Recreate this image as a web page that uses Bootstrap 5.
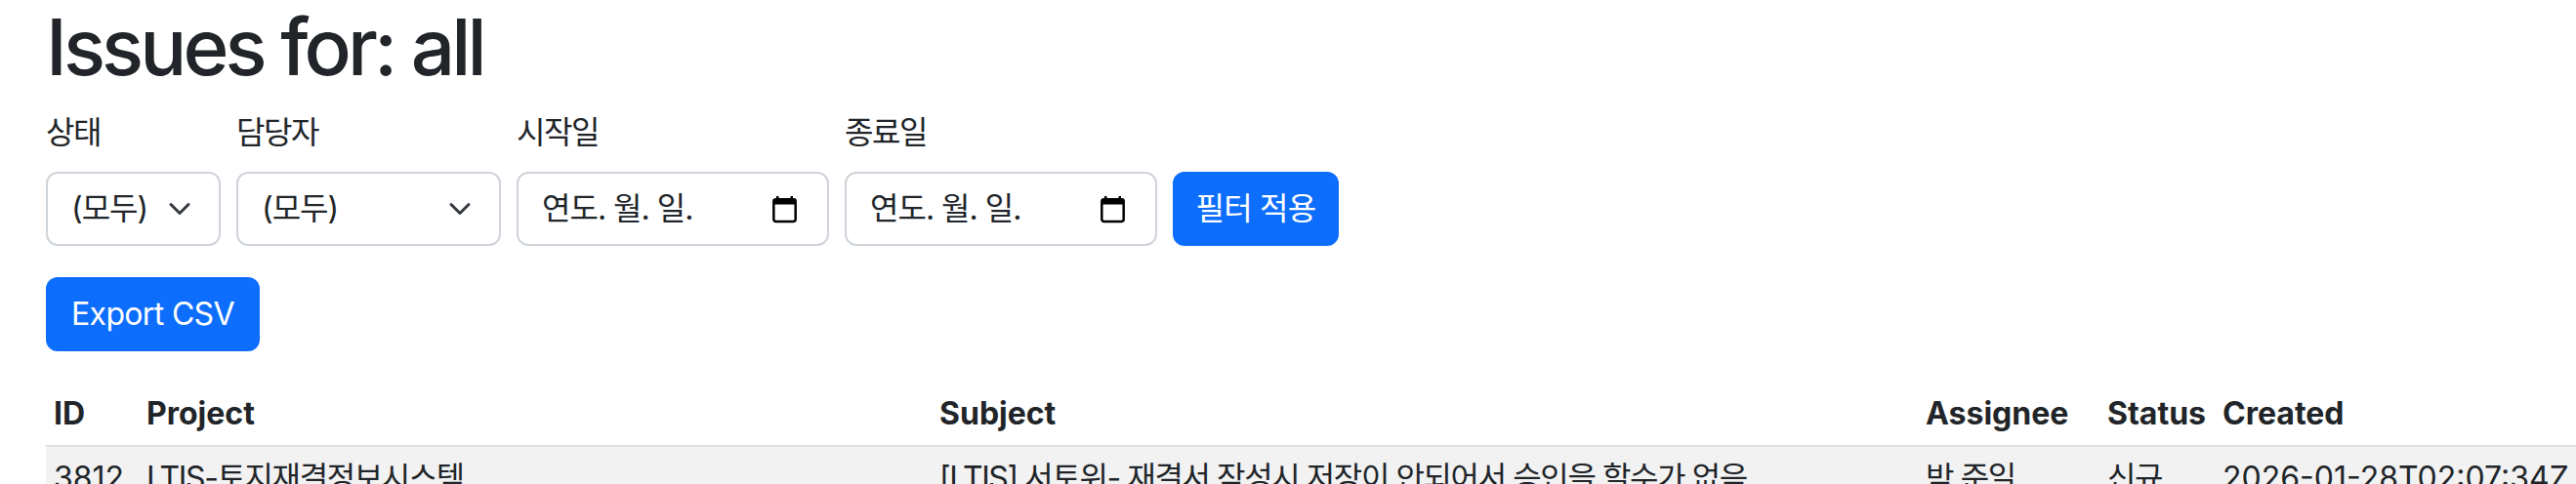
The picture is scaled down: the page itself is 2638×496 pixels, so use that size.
<!DOCTYPE html>
<html lang="ko">
<head>
<meta charset="utf-8">
<title>Issues</title>
<link href="https://cdn.jsdelivr.net/npm/bootstrap@5.3.0/dist/css/bootstrap.min.css" rel="stylesheet">
<style>
html { zoom: 2; }
html, body { overflow: hidden; height: 100%; }
body { font-family: Inter, "Noto Sans CJK KR", sans-serif; }
.page-wrap { width: 1319px; padding: 0 24px 0 23.5px; }
.issues-title { margin-bottom: 8px; font-weight: 500; letter-spacing: -1.95px; }
.form-label, .ko-tight { letter-spacing: -.7px; }
.form-select, .form-control { border-color: #ced4da; }
.form-select { letter-spacing: -.5px; }
.sel-status { width: 89.5px; padding-right: 28px; }
.sel-assignee { width: 135.5px; }
.date-box { width: 160px; height: 38px; }
.date-box span { letter-spacing: -.5px; }
.date-box svg { width: 14.5px; height: 14.5px; margin-right: 2.5px; }
.btn-apply { width: 85px; padding-left: 0; padding-right: 0; letter-spacing: -.4px; }
.btn-export { letter-spacing: -.33px; }
.tbl-wrap { width: 1296px; }
.issue-table { table-layout: fixed; width: 1296px; white-space: nowrap; margin: 0; }
.c-id { width: 47.5px; }
.c-project { width: 406px; }
.c-subject { width: 505px; }
.c-assignee { width: 93px; }
.c-status { width: 59px; }
</style>
</head>
<body>
<div class="page-wrap">
<h1 class="issues-title">Issues for: all</h1>
<form class="d-flex align-items-end gap-2 mb-3">
  <div><label class="form-label">상태</label><select class="form-select sel-status"><option>(모두)</option></select></div>
  <div><label class="form-label">담당자</label><select class="form-select sel-assignee"><option>(모두)</option></select></div>
  <div><label class="form-label">시작일</label><div class="form-control date-box d-flex justify-content-between align-items-center"><span>연도. 월. 일.</span><svg viewBox="0 0 14 14"><path d="M3.5 0.5v2M10.5 0.5v2" stroke="#000" stroke-width="1.2"/><rect x="1.6" y="2" width="10.8" height="11" rx="1" fill="none" stroke="#000" stroke-width="1.2"/><rect x="1.6" y="2" width="10.8" height="2.6" fill="#000"/></svg></div></div>
  <div><label class="form-label">종료일</label><div class="form-control date-box d-flex justify-content-between align-items-center"><span>연도. 월. 일.</span><svg viewBox="0 0 14 14"><path d="M3.5 0.5v2M10.5 0.5v2" stroke="#000" stroke-width="1.2"/><rect x="1.6" y="2" width="10.8" height="11" rx="1" fill="none" stroke="#000" stroke-width="1.2"/><rect x="1.6" y="2" width="10.8" height="2.6" fill="#000"/></svg></div></div>
  <button type="button" class="btn btn-primary btn-apply">필터 적용</button>
</form>
<a class="btn btn-primary btn-export mb-3" href="#">Export CSV</a>
<div class="tbl-wrap">
<table class="table table-striped table-sm issue-table">
<colgroup><col class="c-id"><col class="c-project"><col class="c-subject"><col class="c-assignee"><col class="c-status"><col></colgroup>
<thead><tr><th>ID</th><th>Project</th><th>Subject</th><th>Assignee</th><th>Status</th><th>Created</th></tr></thead>
<tbody><tr><td>3812</td><td class="ko-tight">LTIS-토지재결정보시스템</td><td class="ko-tight">[LTIS] 서토위- 재결서 작성시 저장이 안되어서 승인을 할수가 없음</td><td class="ko-tight">박 준일</td><td class="ko-tight">신규</td><td>2026-01-28T02:07:34Z</td></tr></tbody>
</table>
</div>
</div>
<script src="https://cdn.jsdelivr.net/npm/bootstrap@5.3.0/dist/js/bootstrap.bundle.min.js"></script>
</body>
</html>
